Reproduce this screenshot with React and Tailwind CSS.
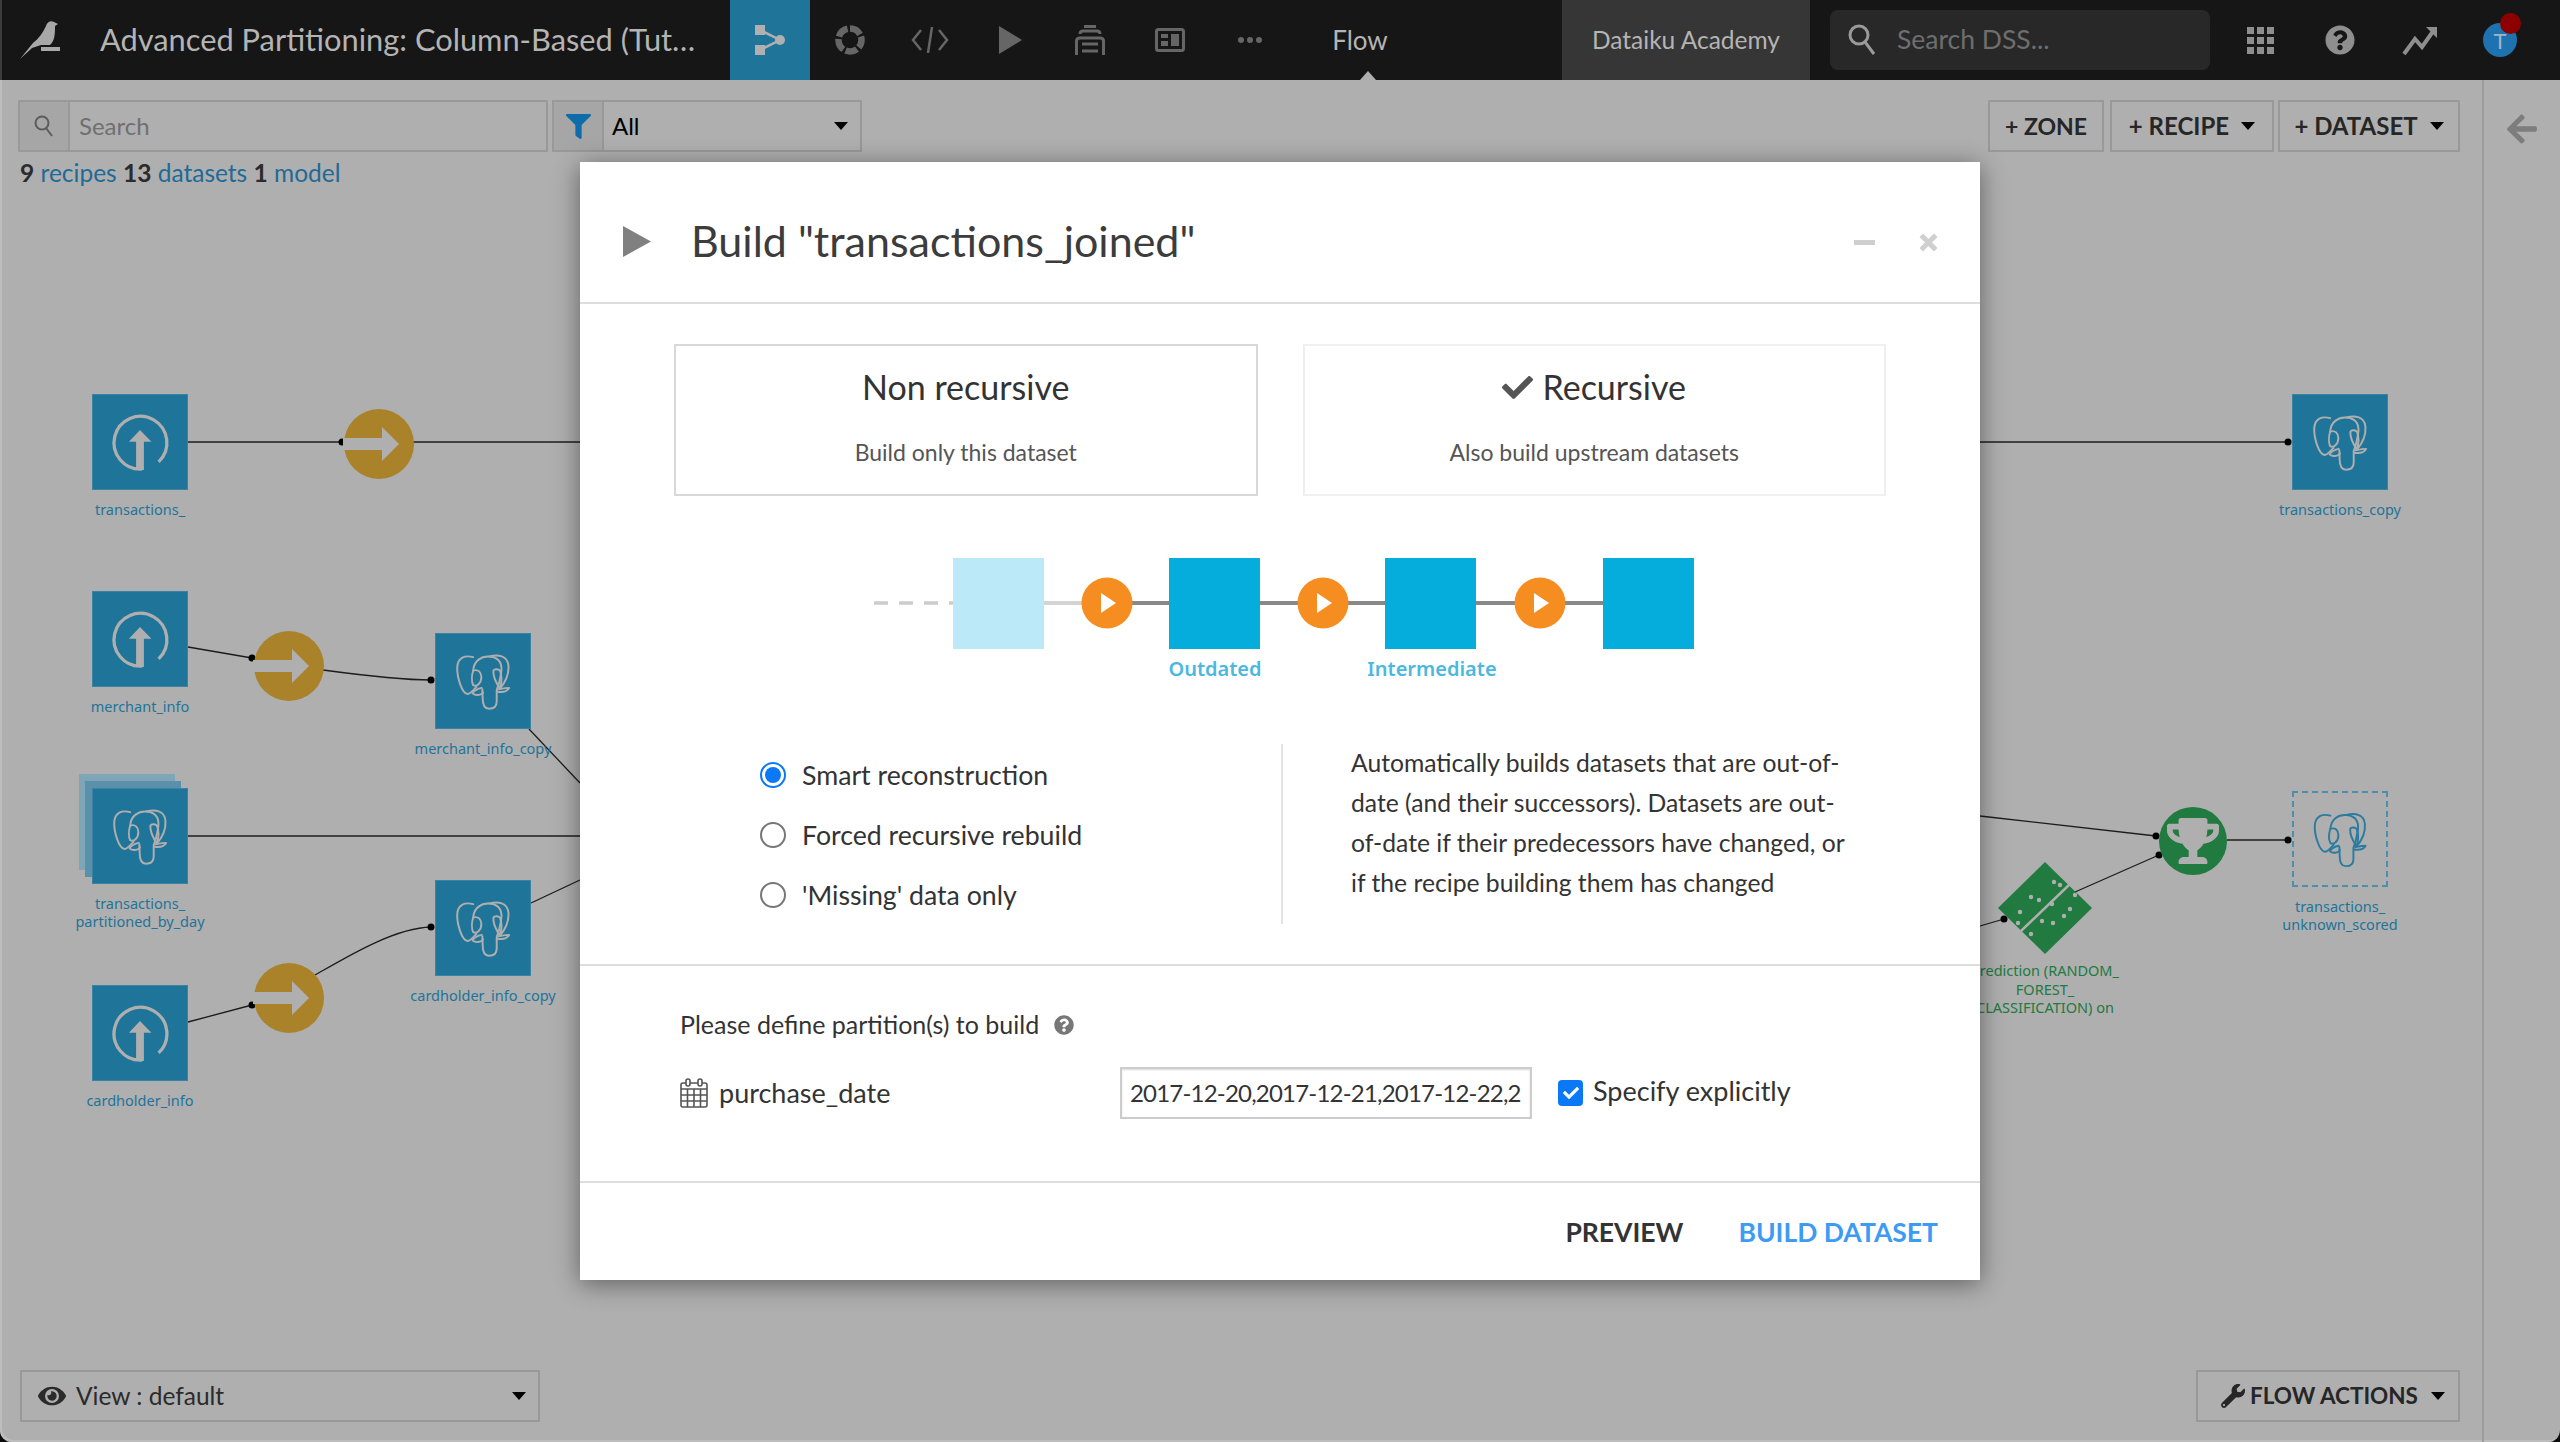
import { FaCheck, FaEye, FaFilter, FaQuestionCircle, FaTrophy, FaWrench, FaArrowLeft } from 'react-icons/fa';

const Caret = ({ className = '' }) => (
  <span className={`inline-block w-0 h-0 border-l-[7px] border-r-[7px] border-t-[8px] border-l-transparent border-r-transparent border-t-black ${className}`} />
);

const UploadGlyph = () => (
  <svg viewBox="96 43 288 288" className="w-full h-full">
    <path d="M246 270A81 81 0 1 1 297 248" fill="none" stroke="#afafaf" strokeWidth="10" />
    <path d="M206 186L240 150L275 186H252V273H228V186Z" fill="#afafaf" />
  </svg>
);

const ElephantGlyph = ({ color = '#afafaf' }) => (
  <svg viewBox="36 43 288 288" className="w-full h-full" fill="none" stroke={color} strokeWidth="6" strokeLinecap="round" strokeLinejoin="round">
    <path d="M150 114C125 107 103 115 101 145C100 175 115 225 133 227C141 227 151 215 160 205" />
    <path d="M150 155C152 125 175 110 200 112C235 115 240 140 235 165C232 185 228 200 222 215V250C222 268 210 272 198 272C183 272 179 260 179 240L178 212" />
    <path d="M200 112C225 105 255 108 258 140C260 170 245 195 232 210" />
    <path d="M176 208C165 210 150 218 148 225C155 232 175 232 180 222" />
    <path d="M228 212C240 210 252 208 260 208C255 218 240 222 225 220" />
    <path d="M150 155C145 170 145 190 150 200C160 205 175 195 175 175C175 160 165 150 150 155Z" />
    <path d="M212 155C210 170 222 195 232 210C238 190 238 170 232 155C225 150 215 150 212 155Z" />
  </svg>
);

const nodes = [
  { x: 92, y: 394, label: ['transactions_'], icon: 'upload' },
  { x: 92, y: 591, label: ['merchant_info'], icon: 'upload' },
  { x: 92, y: 985, label: ['cardholder_info'], icon: 'upload' },
  { x: 92, y: 788, label: ['transactions_', 'partitioned_by_day'], icon: 'pg', stacked: true },
  { x: 435, y: 633, label: ['merchant_info_copy'], icon: 'pg' },
  { x: 435, y: 880, label: ['cardholder_info_copy'], icon: 'pg' },
  { x: 2292, y: 394, label: ['transactions_copy'], icon: 'pg' },
  { x: 2292, y: 791, label: ['transactions_', 'unknown_scored'], icon: 'pg', dashed: true },
];

const recipes = [
  { x: 379, y: 444 },
  { x: 289, y: 666 },
  { x: 289, y: 998 },
];

const edges = [
  'M188 442H580',
  'M1980 442H2288',
  'M188 647L252 658',
  'M323 670C360 675 400 680 431 680',
  'M529 729L580 783',
  'M188 836H580',
  'M531 903L580 880',
  'M188 1022L252 1005',
  'M315 975C350 955 395 928 431 927',
  'M1980 816L2156 836',
  'M1980 926L2004 919',
  'M2075 892L2159 855',
  'M2227 840H2288',
];

const dots = [
  [342, 442], [2288, 442], [252, 658], [431, 680], [252, 1005], [431, 927],
  [2156, 836], [2159, 855], [2288, 840], [2004, 919],
];

const diamondDots = [
  [2054, 882], [2060, 885], [2031, 897], [2039, 900], [2052, 904], [2075, 895], [2064, 916], [2070, 909],
  [2020, 912], [2018, 923], [2042, 921], [2053, 923], [2031, 934],
];

const FlowCanvas = () => (
  <div className="absolute inset-0 overflow-hidden">
    <svg viewBox="0 80 2482 1362" className="absolute left-0 top-0 w-[2482px] h-[1362px]">
      {edges.map((d) => (
        <path key={d} d={d} fill="none" stroke="#1c1c1c" strokeWidth="1.3" />
      ))}
      {dots.map(([cx, cy]) => (
        <circle key={`${cx}-${cy}`} cx={cx} cy={cy} r="3.5" fill="#000" />
      ))}
      {recipes.map((r) => (
        <g key={r.y} transform={`translate(${r.x} ${r.y})`}>
          <circle r="35" fill="#a9822a" />
          <path d="M-36 -6H3V-17L20 0L3 17V6H-36Z" fill="#afafaf" />
        </g>
      ))}
      <polygon points="2045,862 2092,908 2045,954 1998,908" fill="#217a40" />
      <path d="M2021 931L2070 884" stroke="#afafaf" strokeWidth="2.5" />
      {diamondDots.map(([cx, cy]) => (
        <circle key={`${cx}-${cy}`} cx={cx} cy={cy} r="2.2" fill="#afafaf" />
      ))}
      <circle cx="2193" cy="841" r="34" fill="#217a40" />
    </svg>
    {nodes.map((n) => (
      <div key={n.x + '-' + n.y} className="absolute w-[96px] h-[96px]" style={{ left: n.x, top: n.y - 80 }}>
        {n.stacked && <div className="absolute -left-[13px] -top-[14px] w-[96px] h-[96px] bg-[#7fa5b8]" />}
        {n.stacked && <div className="absolute -left-[7px] -top-[7px] w-[96px] h-[96px] bg-[#5a90aa]" />}
        <div className={n.dashed ? 'relative w-full h-full border-2 border-dashed border-[#4f8eab]' : 'relative w-full h-full bg-[#1f7499] border border-[#3a83a3]'}>
          {n.icon === 'upload' ? <UploadGlyph /> : <ElephantGlyph color={n.dashed ? '#2a7ba0' : '#afafaf'} />}
        </div>
        <div className="absolute left-1/2 -translate-x-1/2 top-[106px] w-[220px] text-center text-[14.5px] leading-[18px] text-[#1f7499] font-['Noto_Sans',sans-serif]">
          {n.label.map((l) => (
            <div key={l}>{l}</div>
          ))}
        </div>
      </div>
    ))}
    <div className="absolute left-[2159px] top-[727px] w-[68px] h-[68px] flex items-center justify-center text-[#afafaf]">
      <FaTrophy size={52} />
    </div>
    <div className="absolute left-[1945px] top-[881px] w-[200px] text-center text-[14.5px] leading-[18.5px] text-[#217a40] font-['Noto_Sans',sans-serif]">
      <div>Prediction (RANDOM_</div>
      <div>FOREST_</div>
      <div>CLASSIFICATION) on</div>
    </div>
  </div>
);

const navIcons = [
  <svg key="recipes" viewBox="0 0 30 30" className="w-[30px] h-[30px]" fill="none" stroke="#666" strokeWidth="6.5">
    <circle cx="15" cy="15" r="11.5" strokeDasharray="12 2.45" strokeDashoffset="4" />
  </svg>,
  <svg key="code" viewBox="0 0 38 26" className="w-[38px] h-[26px]" fill="none" stroke="#666" strokeWidth="2.5">
    <path d="M10 3L2 13L10 23M28 3L36 13L28 23M21 0L17 26" />
  </svg>,
  <svg key="run" viewBox="0 0 23 28" className="w-[23px] h-[28px]" fill="#666">
    <path d="M0 0L23 14L0 28Z" />
  </svg>,
  <svg key="stack" viewBox="0 0 30 30" className="w-[30px] h-[30px]" fill="none" stroke="#666" strokeWidth="3">
    <path d="M9 1.5H21M5 9C5 7 6 6 8 6H22C24 6 25 7 25 9M1.5 30V16C1.5 14 3 13 5 13H25C27 13 28.5 14 28.5 16V30M7 19H23M7 26H23" />
  </svg>,
  <svg key="dash" viewBox="0 0 30 24" className="w-[30px] h-[24px]" fill="none">
    <rect x="1.5" y="1.5" width="27" height="21" rx="2" stroke="#666" strokeWidth="3" />
    <rect x="6" y="6" width="7" height="4" fill="#666" />
    <rect x="6" y="13" width="7" height="5" fill="#666" />
    <rect x="16" y="6" width="8" height="12" fill="#666" />
  </svg>,
  <svg key="more" viewBox="0 0 24 6" className="w-[24px] h-[6px]" fill="#666">
    <circle cx="3" cy="3" r="3" />
    <circle cx="12" cy="3" r="3" />
    <circle cx="21" cy="3" r="3" />
  </svg>,
];

const TopBar = () => (
  <header className="h-[80px] shrink-0 flex bg-[#161616] border-l-2 border-[#3b3b3b]">
    <div className="w-[98px] flex items-center pl-[16px]">
      <svg viewBox="18 22 44 42" className="w-[44px] h-[42px]" fill="#a8a8a8">
        <path d="M20 62L33 46C38 42 43 36 46 29C47 25 51 23 54 25L58 27L55 29C55 36 55 44 50 48H41L32 51Z" />
        <rect x="41" y="50" width="19" height="4" />
      </svg>
    </div>
    <div className="w-[630px] flex items-center text-[#b4b4b4] text-[30.8px] whitespace-nowrap font-['Lato',sans-serif]">
      Advanced Partitioning: Column-Based (Tut…
    </div>
    <div className="w-[80px] flex items-center justify-center bg-[#1f7499]">
      <svg viewBox="0 0 30 30" className="w-[30px] h-[30px]" fill="#b0b0b0">
        <rect x="0" y="0" width="10" height="10" />
        <rect x="0" y="20" width="10" height="10" />
        <circle cx="25" cy="15" r="5" />
        <path d="M5 5L25 15L5 25" fill="none" stroke="#b0b0b0" strokeWidth="2.5" />
      </svg>
    </div>
    {navIcons.map((icon) => (
      <div key={icon.key} className="w-[80px] flex items-center justify-center">{icon}</div>
    ))}
    <div className="relative w-[140px] flex items-center justify-center text-[#b4b4b4] text-[26px] font-['Lato',sans-serif]">
      Flow
      <span className="absolute bottom-0 left-[70px] w-0 h-0 border-l-[8px] border-r-[8px] border-b-[9px] border-l-transparent border-r-transparent border-b-[#afafaf]" />
    </div>
    <div className="ml-[132px] w-[248px] flex items-center justify-center bg-[#363636] text-[#b4b4b4] text-[24.5px] font-['Lato',sans-serif]">
      Dataiku Academy
    </div>
    <div className="ml-[20px] my-[10px] w-[380px] flex items-center bg-[#282828] rounded-lg px-[18px] gap-[21px] text-[#6e6e6e] text-[26.5px] font-['Lato',sans-serif]">
      <svg viewBox="0 0 28 32" className="w-[28px] h-[32px]" fill="none" stroke="#9a9a9a" strokeWidth="3">
        <circle cx="11" cy="11" r="9" />
        <path d="M17 18L26 30" />
      </svg>
      Search DSS...
    </div>
    <div className="ml-[10px] w-[80px] flex items-center justify-center">
      <div className="grid grid-cols-3 gap-[3px]">
        {Array.from({ length: 9 }).map((_, i) => (
          <div key={i} className="w-[7px] h-[7px] bg-[#8e8e8e]" />
        ))}
      </div>
    </div>
    <div className="w-[80px] flex items-center justify-center text-[#8e8e8e]">
      <FaQuestionCircle size={30} />
    </div>
    <div className="w-[80px] flex items-center justify-center">
      <svg viewBox="0 0 36 32" className="w-[36px] h-[32px]" fill="none" stroke="#8e8e8e" strokeWidth="4">
        <path d="M2 30L13 15L20 23L32 6" />
        <path d="M24 3H35V14Z" fill="#8e8e8e" strokeWidth="0" />
      </svg>
    </div>
    <div className="w-[80px] flex items-center justify-center">
      <div className="relative w-[34px] h-[34px] rounded-full bg-[#1f72b0] flex items-center justify-center text-[#9fb6c6] text-[22px] font-['Lato',sans-serif]">
        T
        <span className="absolute -right-[4px] -top-[10px] w-[21px] h-[21px] rounded-full bg-[#8c0000]" />
      </div>
    </div>
  </header>
);

const Toolbar = () => (
  <div className="relative flex justify-between pl-[18px] pr-[22px] pt-[20px] font-['Lato',sans-serif]">
    <div>
      <div className="flex gap-[4px] h-[52px]">
        <div className="w-[530px] flex border-2 border-[#999]">
          <div className="w-[50px] flex items-center justify-center bg-[#a6a6a6] border-r-2 border-[#999]">
            <svg viewBox="0 0 20 22" className="w-[20px] h-[22px]" fill="none" stroke="#5c5c5c" strokeWidth="2">
              <circle cx="8" cy="8" r="6.5" />
              <path d="M12 13L18 21" />
            </svg>
          </div>
          <div className="flex items-center pl-[9px] text-[24px] text-[#6f6f6f]">Search</div>
        </div>
        <div className="w-[310px] flex border-2 border-[#999]">
          <div className="w-[50px] flex items-center justify-center bg-[#a6a6a6] border-r-2 border-[#999] text-[#0e6cab]">
            <FaFilter size={25} />
          </div>
          <div className="flex-1 flex items-center justify-between pl-[8px] pr-[12px] text-[24px] text-black">
            All
            <Caret />
          </div>
        </div>
      </div>
      <div className="mt-[6px] pl-[2px] text-[24.5px] leading-[30px] text-[#1f6a96] whitespace-nowrap">
        <b className="text-[#2b2b2b]">9</b> recipes <b className="text-[#2b2b2b]">13</b> datasets <b className="text-[#2b2b2b]">1</b> model
      </div>
    </div>
    <div className="flex h-[52px] text-[#262626] font-bold">
      <div className="w-[116px] flex items-center justify-center border-2 border-[#999] text-[23px]">+ ZONE</div>
      <div className="ml-[6px] w-[164px] flex items-center justify-center gap-[12px] border-2 border-[#999] text-[24px]">+ RECIPE <Caret /></div>
      <div className="ml-[4px] w-[182px] flex items-center justify-center gap-[12px] border-2 border-[#999] text-[24px]">+ DATASET <Caret /></div>
    </div>
  </div>
);

const BottomBar = () => (
  <div className="relative flex justify-between pl-[20px] pr-[22px] pb-[20px] font-['Lato',sans-serif]">
    <div className="w-[520px] h-[52px] flex items-center border-2 border-[#999] pl-[16px] pr-[12px] text-[#2b2b2b] text-[24.5px]">
      <FaEye size={28} className="mr-[10px]" />
      View : default
      <Caret className="ml-auto" />
    </div>
    <div className="w-[264px] h-[52px] flex items-center gap-[5px] border-2 border-[#999] pl-[23px] text-[#262626] text-[22.5px] font-bold whitespace-nowrap">
      <FaWrench size={24} />
      FLOW ACTIONS
      <Caret className="ml-[8px]" />
    </div>
  </div>
);

const ModeCard = ({ title, sub, check, border }) => (
  <div className={`h-[152px] border-2 ${border} flex flex-col items-center pt-[19px]`}>
    <div className="flex items-center gap-[9px] text-[34px] leading-[44px] text-[#333]">
      {check && <FaCheck size={31} className="text-[#555]" />}
      {title}
    </div>
    <div className="mt-[28px] text-[23px] leading-[30px] text-[#555]">{sub}</div>
  </div>
);

const Radio = ({ label, on }) => (
  <div className="h-[60px] flex items-center gap-[16px] text-[26.7px] text-[#333]">
    {on ? (
      <span className="w-[26px] h-[26px] rounded-full border-2 border-[#0b78f6] flex items-center justify-center">
        <span className="w-[16px] h-[16px] rounded-full bg-[#0b78f6]" />
      </span>
    ) : (
      <span className="w-[26px] h-[26px] rounded-full border-2 border-[#777]" />
    )}
    {label}
  </div>
);

const Diagram = () => (
  <svg viewBox="874 558 820 125" className="block ml-[294px] mt-[62px] w-[820px] h-[125px]">
    <path d="M874 603H953" stroke="#ccc" strokeWidth="3.5" strokeDasharray="14 11" />
    <path d="M1044 603H1082" stroke="#d4d4d4" strokeWidth="4" />
    <path d="M1132 603H1603" stroke="#888" strokeWidth="4" />
    <rect x="953" y="558" width="91" height="91" fill="#bce9f8" />
    {[1169, 1385, 1603].map((x) => (
      <rect key={x} x={x} y="558" width="91" height="91" fill="#04addc" />
    ))}
    {[1107, 1323, 1540].map((cx) => (
      <g key={cx}>
        <circle cx={cx} cy="603" r="25.5" fill="#f68d20" />
        <path d={`M${cx - 6} 593L${cx + 9} 603L${cx - 6} 613Z`} fill="#fff" />
      </g>
    ))}
    <text x="1215" y="676" textAnchor="middle" fontSize="20" fontWeight="600" fill="#4bb8e0" fontFamily="Noto Sans, sans-serif">Outdated</text>
    <text x="1432" y="676" textAnchor="middle" fontSize="20" fontWeight="600" fill="#4bb8e0" fontFamily="Noto Sans, sans-serif">Intermediate</text>
  </svg>
);

const CalendarGlyph = () => (
  <svg viewBox="0 0 28 30" className="w-[28px] h-[30px]" fill="none" stroke="#555" strokeWidth="1.6">
    <rect x="1" y="5" width="26" height="24" rx="2" />
    <path d="M1 11H27M1 17H27M1 23H27M7.5 11V29M14 11V29M20.5 11V29" />
    <rect x="6" y="1" width="4" height="7" rx="2" fill="#fff" />
    <rect x="18" y="1" width="4" height="7" rx="2" fill="#fff" />
  </svg>
);

const BuildModal = () => (
  <div className="absolute left-[580px] top-[82px] w-[1400px] h-[1118px] bg-white flex flex-col shadow-[0_4px_24px_rgba(0,0,0,0.45)] font-['Lato',sans-serif]">
    <div className="h-[142px] shrink-0 flex items-center border-b-2 border-[#ddd] pt-[18px] pl-[43px] pr-[42px]">
      <svg viewBox="0 0 28 31" className="w-[28px] h-[31px] mr-[40px]" fill="#808080">
        <path d="M0 0L28 15.5L0 31Z" />
      </svg>
      <div className="text-[43px] text-[#3c3c3c] whitespace-nowrap">Build "transactions_joined"</div>
      <div className="ml-auto mt-[2px] w-[21px] h-[5px] bg-[#cfcfcf]" />
      <svg viewBox="0 0 17 17" className="ml-[44px] mt-[2px] w-[19px] h-[19px]" fill="none" stroke="#cfcfcf" strokeWidth="4.5">
        <path d="M2 2L15 15M15 2L2 15" />
      </svg>
    </div>
    <div className="pt-[40px] px-[94px] grid grid-cols-2 gap-[45px]">
      <ModeCard title="Non recursive" sub="Build only this dataset" border="border-[#d8d8d8]" />
      <ModeCard title="Recursive" sub="Also build upstream datasets" border="border-[#f0f0f0]" check />
    </div>
    <Diagram />
    <div className="mt-[61px] h-[180px] flex">
      <div className="w-[701px] pl-[180px] pt-[1px]">
        <Radio label="Smart reconstruction" on />
        <Radio label="Forced recursive rebuild" />
        <Radio label="'Missing' data only" />
      </div>
      <div className="border-l-2 border-[#e4e4e4] pl-[68px] text-[24.7px] leading-[40px] text-[#333] whitespace-nowrap">
        <div className="-mt-[1px]">
          Automatically builds datasets that are out-of-<br />
          date (and their successors). Datasets are out-<br />
          of-date if their predecessors have changed, or<br />
          if the recipe building them has changed
        </div>
      </div>
    </div>
    <div className="mt-[40px] h-[219px] shrink-0 border-y-2 border-[#ddd] px-[100px] pt-[44px]">
      <div className="flex items-center gap-[15px] h-[30px] text-[25px] text-[#333]">
        Please define partition(s) to build
        <FaQuestionCircle size={20} className="text-[#777]" />
      </div>
      <div className="mt-[27px] flex items-center h-[52px] text-[#333]">
        <CalendarGlyph />
        <span className="ml-[11px] w-[401px] text-[27px]">purchase_date</span>
        <div className="w-[412px] h-[52px] flex items-center pl-[8px] border-2 border-[#ccc] shadow-[inset_0_1px_2px_rgba(0,0,0,0.15)] text-[24px] tracking-[-0.8px] whitespace-nowrap">
          2017-12-20,2017-12-21,2017-12-22,2
        </div>
        <span className="ml-[26px] w-[25px] h-[26px] rounded-[4px] bg-[#0b78f6] flex items-center justify-center text-white">
          <FaCheck size={16} />
        </span>
        <span className="ml-[10px] -mt-[4px] text-[27px] whitespace-nowrap">Specify explicitly</span>
      </div>
    </div>
    <div className="flex-1 flex items-center justify-end gap-[55px] pt-[3px] pr-[42px] text-[26.5px] font-bold">
      <span className="text-[#333]">PREVIEW</span>
      <span className="text-[#3d9bf2]">BUILD DATASET</span>
    </div>
  </div>
);

const App = () => (
  <div className="w-[2560px] h-[1442px] flex flex-col bg-[#0c0c0c] overflow-hidden">
    <TopBar />
    <main className="relative flex-1 flex bg-[#afafaf] rounded-b-[12px] shadow-[inset_2px_-2px_0_#bdbdbd] overflow-hidden">
      <div className="relative flex-1 flex flex-col justify-between">
        <FlowCanvas />
        <Toolbar />
        <BottomBar />
      </div>
      <div className="w-[78px] shrink-0 border-l-2 border-[#9c9c9c] flex justify-center pt-[32px] text-[#7d7d7d]">
        <FaArrowLeft size={34} />
      </div>
      <BuildModal />
    </main>
  </div>
);

export default App;
